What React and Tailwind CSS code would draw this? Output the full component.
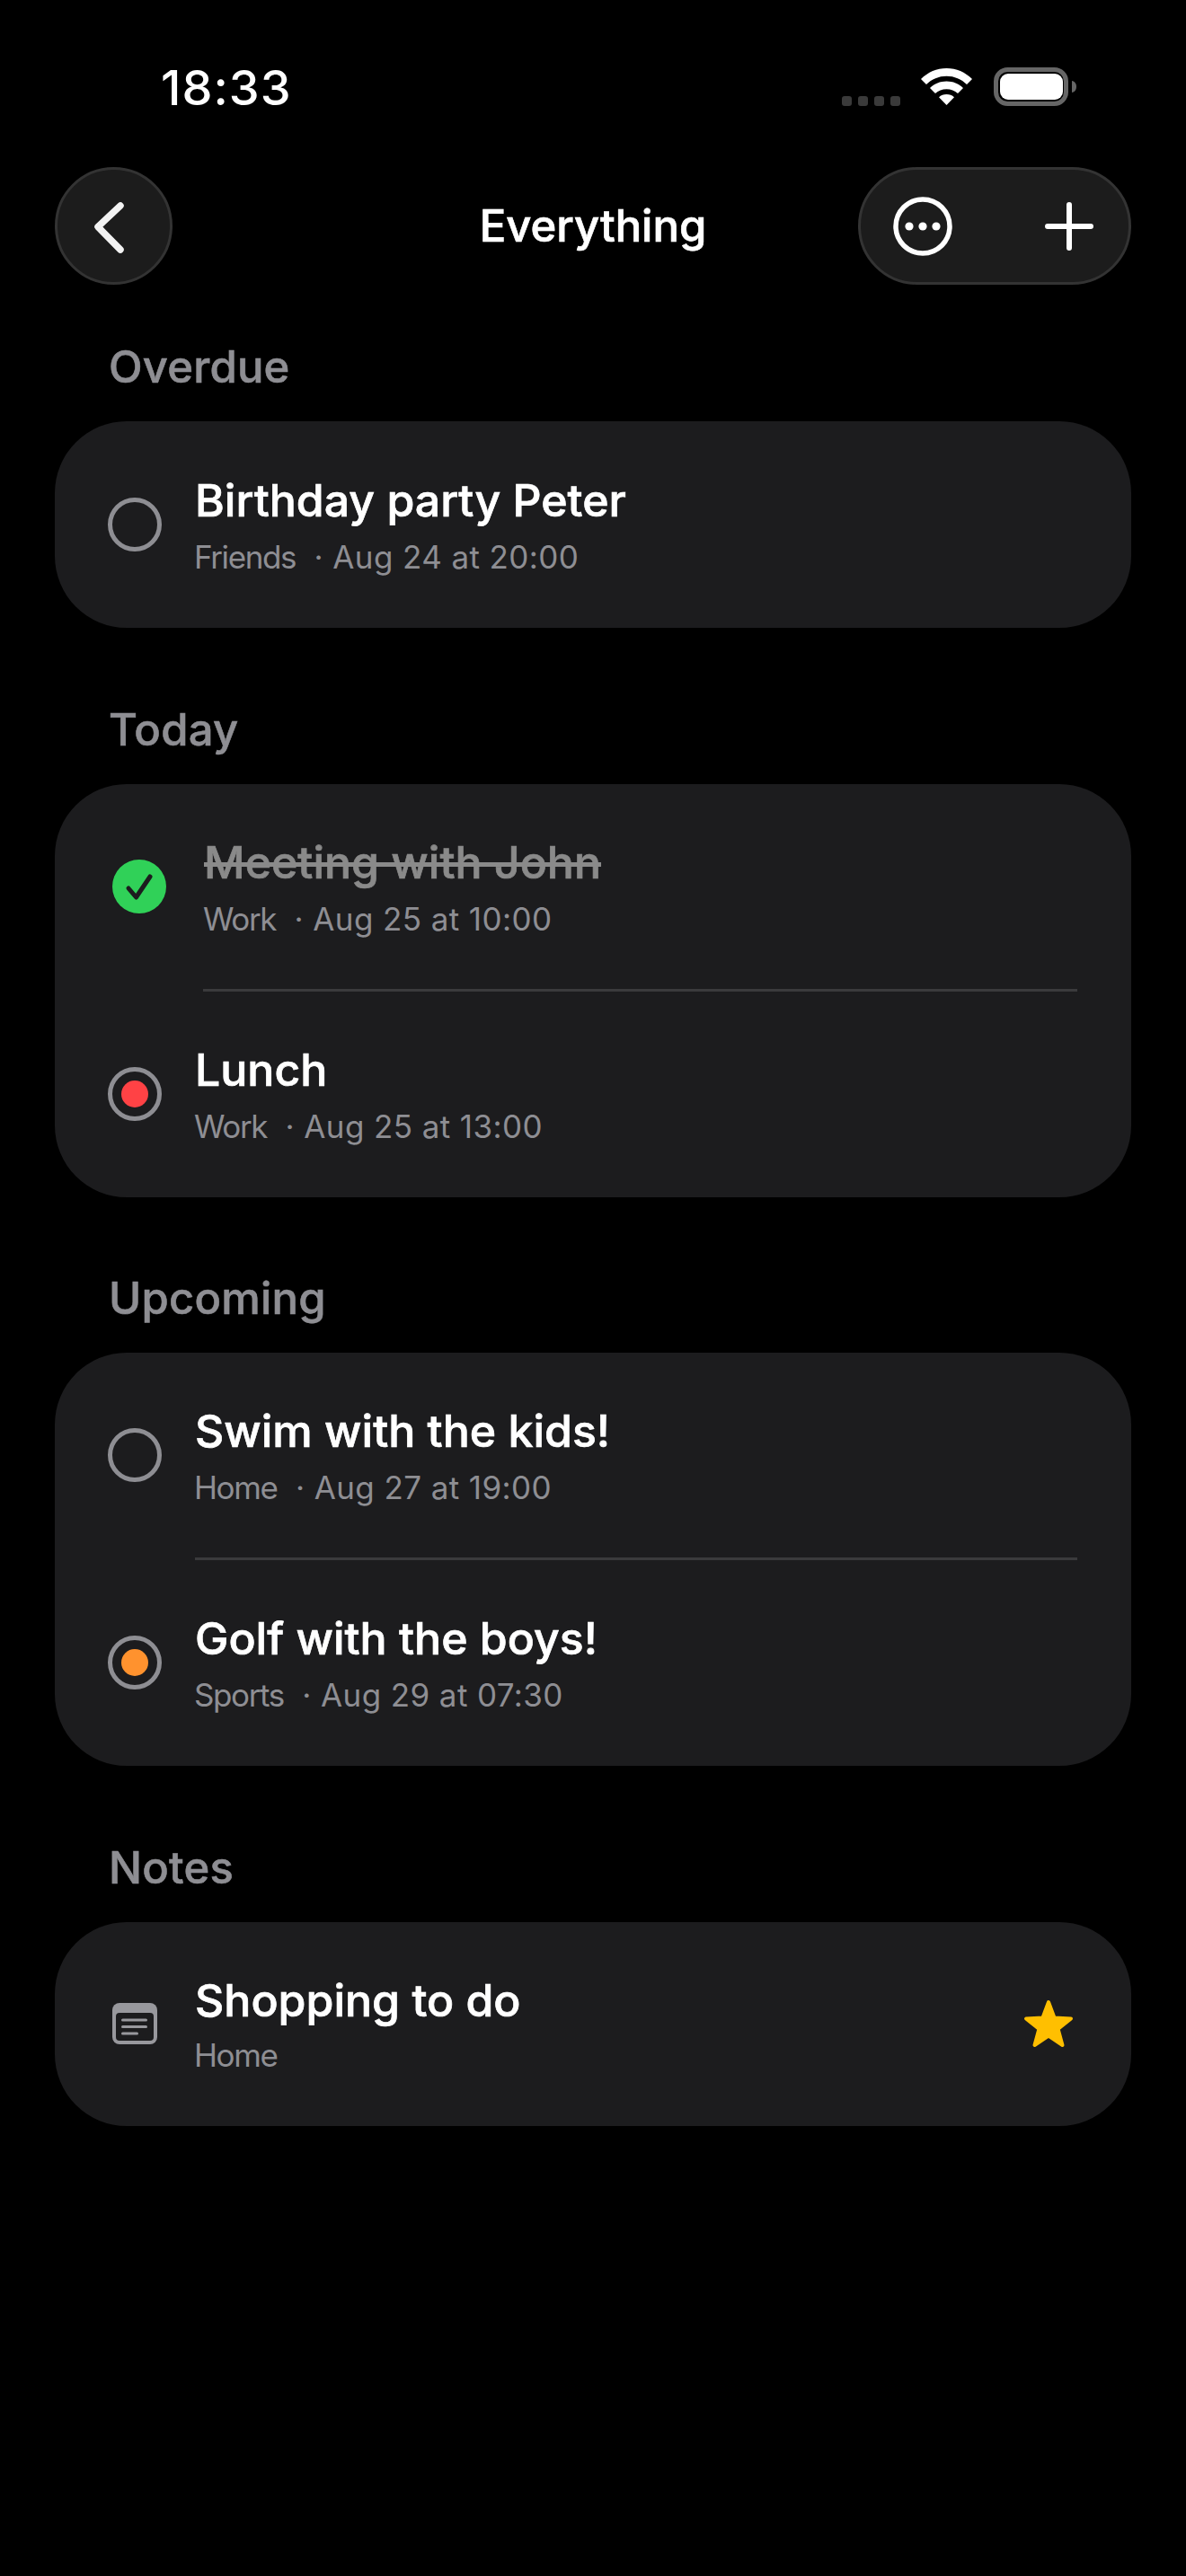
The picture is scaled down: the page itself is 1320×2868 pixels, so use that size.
import React from 'react';

const Radio = ({ dot }) => (
  <div className="w-[60px] h-[60px] shrink-0 rounded-full border-[5px] border-[#8e8e93] flex items-center justify-center">
    {dot && <div className={`w-[30px] h-[30px] rounded-full ${dot}`} />}
  </div>
);

const DoneCheck = () => (
  <div className="w-[60px] h-[60px] shrink-0 rounded-full bg-[#30d158]">
    <svg width="60" height="60" viewBox="0 0 60 60" fill="none">
      <path d="M18 32L26.5 42L42 19" stroke="#1c1c1e" strokeWidth="5" strokeLinecap="round" strokeLinejoin="round" />
    </svg>
  </div>
);

const NoteIcon = () => (
  <div className="w-[60px] shrink-0 flex justify-center">
    <svg width="50" height="46" viewBox="0 0 50 46" fill="none">
      <rect width="50" height="46" rx="8" fill="#98989d" />
      <rect x="4" y="11" width="42" height="31" rx="4" fill="#1c1c1e" />
      <rect x="10" y="17.5" width="29" height="3" rx="1.5" fill="#98989d" />
      <rect x="10" y="25" width="29" height="3" rx="1.5" fill="#98989d" />
      <rect x="10" y="32.5" width="19" height="3" rx="1.5" fill="#98989d" />
    </svg>
  </div>
);

const Star = () => (
  <svg width="56" height="54" viewBox="0 0 56 54" className="shrink-0 mr-[64px]">
    <path
      d="M28 3L34.6 20.6L53 21.4L38.6 33L43.5 51L28 40.7L12.5 51L17.4 33L3 21.4L21.4 20.6Z"
      fill="#ffbf00"
      stroke="#ffbf00"
      strokeWidth="4"
      strokeLinejoin="round"
    />
  </svg>
);

const Row = ({ icon, title, group, date, done, end, note }) => (
  <div className={`flex items-center py-[57px] ${done ? 'pl-[64px] gap-[42px]' : 'pl-[59px] gap-[37px]'}`}>
    {icon}
    <div className="flex-1 min-w-0">
      <div
        className={`text-[50px] leading-[60px] font-medium [-webkit-text-stroke:0.7px] ${
          done ? 'text-[#8a8a8a] line-through decoration-[5px]' : 'text-white'
        }`}
      >
        {title}
      </div>
      <div className={`text-[35px] leading-[42px] text-[#8e8e93] -ml-px ${note ? 'mt-[10px]' : 'mt-[12px]'}`}>
        <span className="tracking-[-1.4px]">{group}</span>
        {date && <span className="tracking-[0.4px]"> &nbsp;· {date}</span>}
      </div>
    </div>
    {end}
  </div>
);

const Section = ({ label, spacing, children }) => (
  <section className={spacing}>
    <h2 className="pl-[60px] text-[49px] leading-[58px] font-medium tracking-[0.2px] [-webkit-text-stroke:0.6px] text-[#8e8e93] mb-[31px]">{label}</h2>
    <div className="bg-[#1c1c1e] rounded-[80px] pb-px">{children}</div>
  </section>
);

const Divider = ({ inset }) => <div className={`h-[3px] bg-[#3a3a3c] mr-[60px] ${inset}`} />;

export default function App() {
  return (
    <div className="min-h-screen bg-black font-[Inter,sans-serif] px-[61px] overflow-hidden">
      {/* status bar */}
      <div className="h-[186px] flex items-start justify-between -mx-[61px]">
        <div className="ml-[179px] mt-[66px] text-[54px] leading-[64px] font-medium tracking-[1px] text-white">18:33</div>
        <div className="mt-[75px] mr-[122px] flex items-end h-[43px]">
          <div className="flex gap-[7px] mr-[23px]">
            <div className="w-[11px] h-[11px] rounded-[3px] bg-[#3a3a3a]" />
            <div className="w-[11px] h-[11px] rounded-[3px] bg-[#3a3a3a]" />
            <div className="w-[11px] h-[11px] rounded-[3px] bg-[#3a3a3a]" />
            <div className="w-[11px] h-[11px] rounded-[3px] bg-[#3a3a3a]" />
          </div>
          <svg width="57" height="41" viewBox="0 0 57 41" className="mr-[24px] mb-[1px]" fill="white">
            <path d="M28.5 0C17.6 0 7.7 4.3 0 12L6 18C12 12.2 19.8 8.8 28.5 8.8C37.2 8.8 45 12.2 51 18L57 12C49.3 4.3 39.4 0 28.5 0Z" />
            <path d="M28.5 14.5C21.4 14.5 15 17.2 10 22L16 28C19.4 25 23.7 23.2 28.5 23.2C33.3 23.2 37.6 25 41 28L47 22C42 17.2 35.6 14.5 28.5 14.5Z" />
            <path d="M28.5 29C25.2 29 22.2 30.1 20 32.2L28.5 41L37 32.2C34.8 30.1 31.8 29 28.5 29Z" />
          </svg>
          <svg width="92" height="43" viewBox="0 0 92 43" fill="none">
            <rect x="2.5" y="2.5" width="78" height="38" rx="13" stroke="#666666" strokeWidth="5" />
            <rect x="7" y="7" width="70" height="29" rx="9" fill="white" />
            <path d="M87 15C90 15.5 92 18 92 21.5C92 25 90 27.5 87 28Z" fill="#666666" />
          </svg>
        </div>
      </div>

      {/* nav */}
      <div className="grid grid-cols-[304px_1fr_304px] items-center h-[131px]">
        <div className="w-[131px] h-[131px] rounded-full bg-[#1c1c1c] border-[3px] border-[#333333] flex items-center justify-center">
          <svg width="131" height="131" viewBox="0 0 131 131" fill="none" className="shrink-0">
            <path d="M73 43L48 66.5L73 92" stroke="#f2f2f2" strokeWidth="7.5" strokeLinecap="round" strokeLinejoin="round" />
          </svg>
        </div>
        <h1 className="text-center text-[49px] leading-[58px] font-medium [-webkit-text-stroke:0.7px] text-white">Everything</h1>
        <div className="h-[131px] rounded-full bg-[#1c1c1c] border-[3px] border-[#333333] flex items-center justify-between pl-[36px] pr-[39px]">
          <svg width="66" height="66" viewBox="0 0 66 66" fill="none">
            <circle cx="33" cy="33" r="30" stroke="white" strokeWidth="5.5" />
            <circle cx="18" cy="33" r="4.6" fill="white" />
            <circle cx="33" cy="33" r="4.6" fill="white" />
            <circle cx="48" cy="33" r="4.6" fill="white" />
          </svg>
          <svg width="54" height="54" viewBox="0 0 54 54" fill="none">
            <path d="M27 3V51M3 27H51" stroke="white" strokeWidth="6" strokeLinecap="round" />
          </svg>
        </div>
      </div>

      <Section label="Overdue" spacing="mt-[63px]">
        <div className="pt-px">
          <Row icon={<Radio />} title="Birthday party Peter" group="Friends" date="Aug 24 at 20:00" />
        </div>
      </Section>

      <Section label="Today" spacing="mt-[85px]">
        <Row icon={<DoneCheck />} done title="Meeting with John" group="Work" date="Aug 25 at 10:00" />
        <Divider inset="ml-[165px]" />
        <Row icon={<Radio dot="bg-[#ff4245]" />} title="Lunch" group="Work" date="Aug 25 at 13:00" />
      </Section>

      <Section label="Upcoming" spacing="mt-[84px]">
        <Row icon={<Radio />} title="Swim with the kids!" group="Home" date="Aug 27 at 19:00" />
        <Divider inset="ml-[156px]" />
        <Row icon={<Radio dot="bg-[#ff922e]" />} title="Golf with the boys!" group="Sports" date="Aug 29 at 07:30" />
      </Section>

      <Section label="Notes" spacing="mt-[85px]">
        <Row icon={<NoteIcon />} note title="Shopping to do" group="Home" end={<Star />} />
      </Section>
    </div>
  );
}
